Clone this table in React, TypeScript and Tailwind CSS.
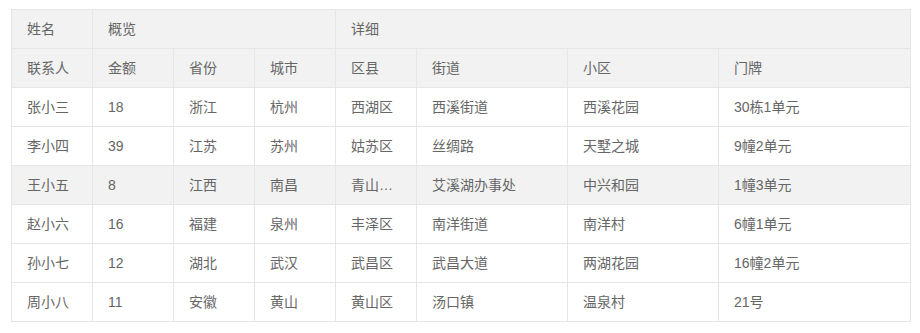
import React from 'react';

interface Row {
  name: string;
  amount: number;
  province: string;
  city: string;
  district: string;
  street: string;
  estate: string;
  door: string;
}

const rows: Row[] = [
  { name: '张小三', amount: 18, province: '浙江', city: '杭州', district: '西湖区', street: '西溪街道', estate: '西溪花园', door: '30栋1单元' },
  { name: '李小四', amount: 39, province: '江苏', city: '苏州', district: '姑苏区', street: '丝绸路', estate: '天墅之城', door: '9幢2单元' },
  { name: '王小五', amount: 8, province: '江西', city: '南昌', district: '青山湖区', street: '艾溪湖办事处', estate: '中兴和园', door: '1幢3单元' },
  { name: '赵小六', amount: 16, province: '福建', city: '泉州', district: '丰泽区', street: '南洋街道', estate: '南洋村', door: '6幢1单元' },
  { name: '孙小七', amount: 12, province: '湖北', city: '武汉', district: '武昌区', street: '武昌大道', estate: '两湖花园', door: '16幢2单元' },
  { name: '周小八', amount: 11, province: '安徽', city: '黄山', district: '黄山区', street: '汤口镇', estate: '温泉村', door: '21号' },
];

const widths = [81, 81, 81, 81, 81, 151, 151, 192];

function Cell({ children }: { children: React.ReactNode }) {
  return (
    <td className="h-[39px] border border-[#e6e6e6] p-0">
      <div className="overflow-hidden text-ellipsis whitespace-nowrap px-[15px] leading-[28px]">{children}</div>
    </td>
  );
}

function Head({ children, colSpan }: { children: React.ReactNode; colSpan?: number }) {
  return (
    <th colSpan={colSpan} className="h-[39px] border border-[#e6e6e6] p-0 text-left font-normal">
      <div className="overflow-hidden text-ellipsis whitespace-nowrap px-[15px] leading-[28px]">{children}</div>
    </th>
  );
}

export default function App() {
  return (
    <div className="min-h-[333px] bg-white pl-[11px] pt-[9px] font-['Liberation_Sans','Noto_Sans_CJK_SC',sans-serif] text-[14px] text-[#666]">
      <div className="w-[900px] border-r border-[#e6e6e6]">
        <table className="w-[899px] table-fixed border-collapse">
          <colgroup>
            {widths.map((w, i) => (
              <col key={i} style={{ width: w }} />
            ))}
          </colgroup>
          <thead className="bg-[#f2f2f2]">
            <tr>
              <Head>姓名</Head>
              <Head colSpan={3}>概览</Head>
              <Head colSpan={4}>详细</Head>
            </tr>
            <tr>
              <Head>联系人</Head>
              <Head>金额</Head>
              <Head>省份</Head>
              <Head>城市</Head>
              <Head>区县</Head>
              <Head>街道</Head>
              <Head>小区</Head>
              <Head>门牌</Head>
            </tr>
          </thead>
          <tbody>
            {rows.map((r, i) => (
              <tr key={r.name} className={i === 2 ? 'bg-[#f2f2f2]' : 'bg-white'}>
                <Cell>{r.name}</Cell>
                <Cell>{r.amount}</Cell>
                <Cell>{r.province}</Cell>
                <Cell>{r.city}</Cell>
                <Cell>{r.district}</Cell>
                <Cell>{r.street}</Cell>
                <Cell>{r.estate}</Cell>
                <Cell>{r.door}</Cell>
              </tr>
            ))}
          </tbody>
        </table>
      </div>
    </div>
  );
}
